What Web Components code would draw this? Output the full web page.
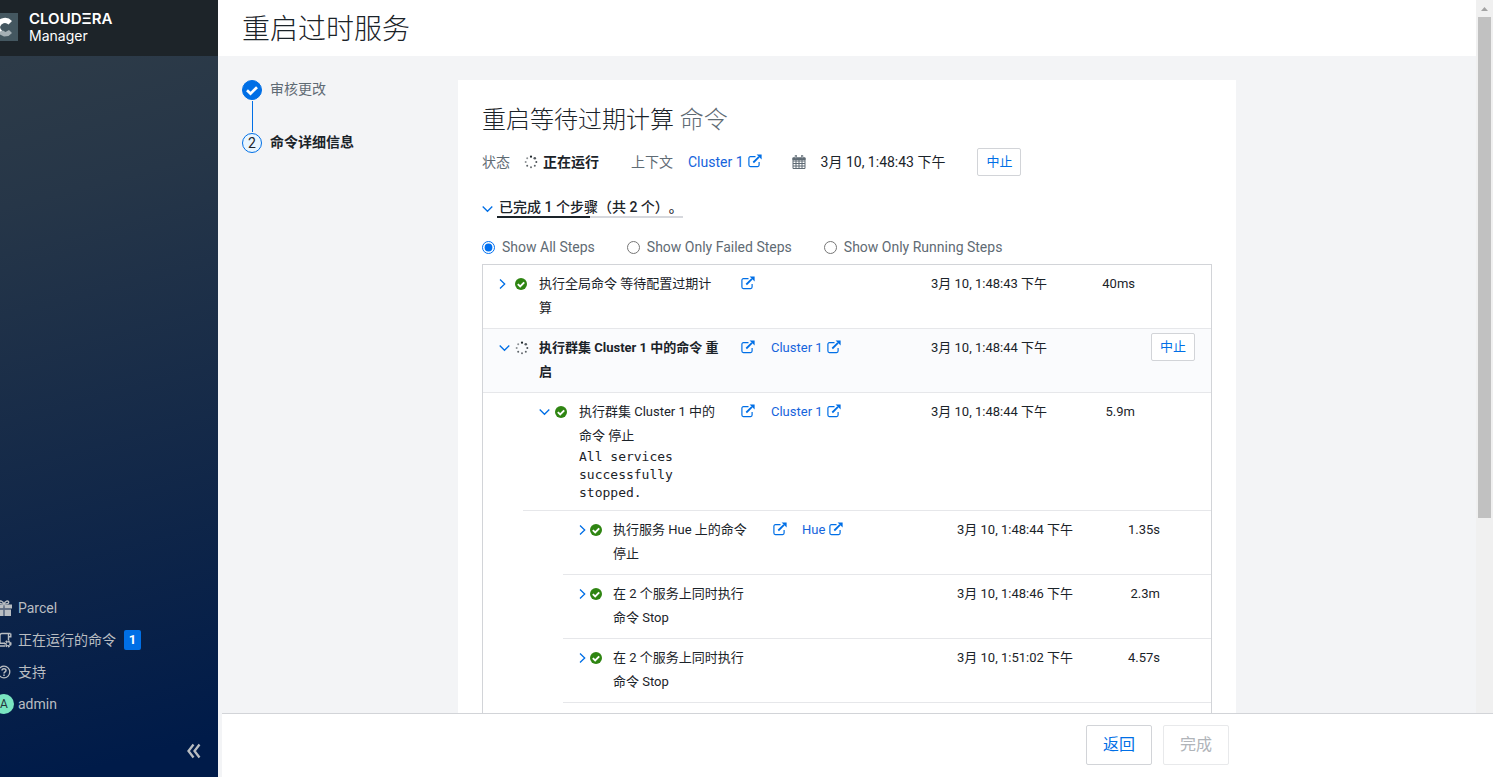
<!DOCTYPE html>
<html lang="zh-CN">
<head>
<meta charset="utf-8">
<title>重启过时服务 - Cloudera Manager</title>
<meta name="viewport" content="width=device-width, initial-scale=1">
<style>
  html, body { height: 100%; margin: 0; }
  body {
    font: 14px/20px Roboto, "Noto Sans CJK SC", sans-serif;
    color: #1b2329;
    overflow: hidden;
    --blue: #006fe6;
    --line: #d2d4d8;
    --muted: #5f6b74;
    --surface: #f3f4f6;
  }
</style>
</head>
<body>
<cm-app></cm-app>

<template id="t-app">
  <style>
    :host { display: grid; grid-template-columns: 218px minmax(0, 1fr); height: 100vh; background: var(--surface); }
    .main { display: flex; flex-direction: column; min-width: 0; min-height: 0; }
    .view { flex: 1; display: grid; grid-template-columns: minmax(0, 1fr) 17px; min-height: 0; }
    .scroll { display: flex; flex-direction: column; min-height: 0; overflow: hidden; }
    header { box-sizing: border-box; background: #fff; height: 56px; padding: 3px 24px 0; display: flex; align-items: center; flex: none; }
    h1 { margin: 0; font-size: 28px; line-height: 40px; font-weight: 300; }
    .body { flex: 1; display: grid; grid-template-columns: 216px minmax(0, 1fr) 216px; padding: 24px 24px 0; min-height: 0; }
    footer { box-sizing: border-box; margin-left: 4px; height: 64px; border-top: 1px solid var(--line); background: #fff; display: flex; align-items: flex-start; justify-content: flex-end; gap: 11px; padding: 11px 264px 0 0; flex: none; }
  </style>
  <cm-sidebar></cm-sidebar>
  <div class="main">
    <div class="view">
      <div class="scroll">
        <header><h1>重启过时服务</h1></header>
        <div class="body">
          <wizard-steps></wizard-steps>
          <command-card></command-card>
        </div>
      </div>
      <scroll-track></scroll-track>
    </div>
    <footer>
      <cm-button size="large">返回</cm-button>
      <cm-button size="large" disabled>完成</cm-button>
    </footer>
  </div>
</template>

<template id="t-sidebar">
  <style>
    :host { display: flex; flex-direction: column; overflow: hidden; color: #b9bdc1; background: linear-gradient(165deg, #303d48 0%, #263648 25%, #001b49 95%); }
    .brand { display: flex; align-items: center; gap: 11px; height: 56px; background: #1d2429; color: #fff; flex: none; margin-left: -10px; }
    .brand svg { margin-bottom: 2px; flex: none; }
    .brand div { display: flex; flex-direction: column; font: 14px/17px Inter, sans-serif; margin-bottom: 2px; }
    .brand b { font-size: 15px; line-height: 17px; font-weight: 600; }
    nav { margin: auto 0 0 -6px; display: flex; flex-direction: column; }
    nav a { display: flex; align-items: center; gap: 4px; height: 32px; color: inherit; text-decoration: none; }
    .slot { width: 20px; height: 20px; display: flex; align-items: center; justify-content: center; }
    .avatar { background: #79e5c0; color: #24343b; border-radius: 50%; font-size: 12px; }
    .badge { margin-left: 4px; width: 17px; height: 20px; border-radius: 2px; background: var(--blue); color: #fff; text-align: center; font-size: 13px; font-weight: 700; }
    button { align-self: flex-end; margin: 20px 14px 16px 0; width: 18px; height: 21px; padding: 0; border: 0; background: none; color: inherit; }
  </style>
  <div class="brand">
    <svg width="28" height="28" viewBox="0 0 28 28" aria-hidden="true">
      <rect width="28" height="28" fill="#445760"/>
      <path d="M22 8A9.5 9.5 0 0 0 5.500 14A9.500 9.500 0 0 0 10 21.500L12 17.500A5 5 0 0 1 10 14A5 5 0 0 1 18.500 11.500Z" fill="#fff"/>
      <path d="M10 18.500 13 17.500 15.500 19 19 17 22 20 18.500 23 14 23.500 10 21.500Z" fill="#a5b0b5"/>
    </svg>
    <div><b>CLOUDΞRA</b><span>Manager</span></div>
  </div>
  <nav aria-label="主导航">
    <a href="#parcel"><span class="slot"><cm-icon name="gift"></cm-icon></span>Parcel</a>
    <a href="#running"><span class="slot"><cm-icon name="commands"></cm-icon></span>正在运行的命令<span class="badge">1</span></a>
    <a href="#support"><span class="slot"><cm-icon name="help"></cm-icon></span>支持</a>
    <a href="#admin"><span class="slot avatar">A</span>admin</a>
  </nav>
  <button type="button" aria-label="收起"><cm-icon name="collapse"></cm-icon></button>
</template>

<template id="t-wizard">
  <style>
    :host { display: block; }
    ol { list-style: none; margin: 0; padding: 0; }
    li { display: grid; grid-template-columns: 20px 1fr; column-gap: 8px; color: var(--muted); }
    .text { line-height: 18px; }
    .dot { width: 20px; height: 20px; box-sizing: border-box; border-radius: 50%; text-align: center; line-height: 18px; border: 1px solid var(--blue); background: #e9f6ff; color: #1b2329; display: flex; justify-content: center; align-items: center; }
    .done .dot { background: var(--blue); color: #fff; }
    .done::after { content: ""; grid-row: 2; justify-self: center; width: 1px; height: 31px; margin: 1px 0; background: var(--blue); }
    .current { color: #1b2329; font-weight: 700; }
    .current .dot { font-weight: 400; }
  </style>
  <ol>
    <li class="done"><span class="dot"><cm-icon name="check"></cm-icon></span><span class="text">审核更改</span></li>
    <li class="current" aria-current="step"><span class="dot">2</span><span class="text">命令详细信息</span></li>
  </ol>
</template>

<template id="t-card">
  <style>
    :host { display: flex; flex-direction: column; background: #fff; padding: 24px 24px 0; min-height: 0; overflow: hidden; }
    h2 { margin: 0; font-size: 24px; line-height: 32px; font-weight: 300; }
    h2 small { font-size: 24px; color: var(--muted); }
    .meta { display: flex; align-items: center; height: 28px; margin-top: 12px; white-space: nowrap; }
    .label { color: var(--muted); }
    .state { display: flex; align-items: center; gap: 5px; font-weight: 700; margin: 0 32px 0 14px; }
    .ctx { margin: 0 30px 0 15px; }
    .cal { color: var(--muted); display: flex; margin-right: 15px; }
    .when { margin-right: 32px; }
    .progress { display: flex; align-items: center; margin-top: 20px; height: 22px; }
    .progress button { padding: 0; border: 0; background: none; color: var(--blue); display: flex; width: 15px; margin-top: 4px; }
    .bar { height: 21px; padding-left: 2px; font-weight: 500; text-spacing-trim: space-all; background: linear-gradient(#1b2329 0 0) 0 100% / 50% 2px no-repeat, linear-gradient(#d6d8dd 0 0) 0 100% / 100% 2px no-repeat; }
    fieldset { display: flex; gap: 32px; border: 0; margin: 19px 0 7px; padding: 0; color: var(--muted); height: 20px; }
    label { display: flex; align-items: center; gap: 7px; }
    input { margin: 0; width: 13px; height: 13px; accent-color: #0070f0; }
    step-table { flex: 1; }
  </style>
  <h2>重启等待过期计算 <small>命令</small></h2>
  <div class="meta">
    <span class="label">状态</span>
    <span class="state"><cm-icon name="spinner"></cm-icon>正在运行</span>
    <span class="label">上下文</span>
    <ext-link class="ctx" href="#cluster">Cluster 1</ext-link>
    <span class="cal"><cm-icon name="calendar"></cm-icon></span>
    <span class="when">3月 10, 1:48:43 下午</span>
    <cm-button>中止</cm-button>
  </div>
  <div class="progress">
    <button type="button" aria-label="折叠步骤"><cm-icon name="down"></cm-icon></button>
    <span class="bar">已完成 1 个步骤（共 2 个）。</span>
  </div>
  <fieldset aria-label="筛选步骤">
    <label><input type="radio" name="filter" checked>Show All Steps</label>
    <label><input type="radio" name="filter">Show Only Failed Steps</label>
    <label><input type="radio" name="filter">Show Only Running Steps</label>
  </fieldset>
  <step-table></step-table>
</template>

<template id="t-table">
  <style>
    :host { display: block; border: 1px solid var(--line); border-bottom: 0; font-size: 13px; line-height: 24px; min-height: 0; overflow: hidden; }
    table, tbody { display: block; }
    tr { display: grid; grid-template-columns: 40px minmax(0, 1fr) 30px 160px 140px 64px 60px; padding: 7px 16px 8px; border-bottom: 1px solid #e6e7ea; }
    tr.running { background: #fafbfd; }
    tr.l2 { margin-left: 40px; }
    tr.l3 { margin-left: 80px; grid-template-columns: 34px minmax(0, 1fr) 29px 155px 140px 63px 35px; }
    td { display: block; padding: 0; min-width: 0; }
    .marks { display: flex; align-items: center; height: 24px; color: var(--blue); }
    .marks button { display: flex; padding: 0; border: 0; background: none; color: inherit; width: 16px; }
    .l3 .marks button { width: 11px; }
    .name { padding-right: 20px; }
    .running .name { font-weight: 700; }
    code { display: block; width: 110px; font: 13px/18px "DejaVu Sans Mono", monospace; }
    .duration { text-align: right; }
    .action { display: flex; justify-content: flex-end; height: 24px; }
    cm-button { margin-top: -3px; }
  </style>
  <table aria-label="命令步骤"><tbody></tbody></table>
</template>

<template id="t-button">
  <style>
    :host { display: block; }
    button { box-sizing: border-box; min-width: 44px; height: 28px; padding: 0 8px; border: 1px solid var(--line); border-radius: 2px; background: #fff; color: var(--blue); font: 13px/20px Roboto, "Noto Sans CJK SC", sans-serif; display: block; white-space: nowrap; }
    :host([size="large"]) button { width: 66px; height: 40px; font-size: 16px; line-height: 24px; }
    button:disabled { color: #b0b4b9; border-color: #e8e9eb; }
  </style>
  <button type="button"><slot></slot></button>
</template>

<template id="t-link">
  <style>
    :host { display: block; white-space: nowrap; }
    a { display: flex; width: max-content; align-items: center; gap: 4px; color: #1664dc; text-decoration: none; }
    cm-icon { color: var(--blue); margin-bottom: 2px; }
    :host([bare]) a { height: 24px; }
  </style>
  <a><slot></slot><cm-icon name="external"></cm-icon></a>
</template>

<template id="t-scroll">
  <style>
    :host { display: flex; flex-direction: column; background: #f0f0f0; padding: 0 2px; }
    svg { flex: none; display: block; }
    .thumb { flex: 72; background: #c1c1c1; }
    .rest { flex: 28; }
  </style>
  <svg width="13" height="17" viewBox="0 0 13 17" aria-hidden="true"><path d="M3 11 6.500 7 10 11Z" fill="#a3a3a3"/></svg>
  <div class="thumb"></div>
  <div class="rest"></div>
</template>

<script>
  const ICONS = {
    external: [14, 14, '<path d="M7.500 2.700H2.400A1.500 1.500 0 0 0 .9 4.200v6.900a1.500 1.500 0 0 0 1.500 1.500h7.200a1.500 1.500 0 0 0 1.500-1.500V8" fill="none" stroke="currentColor" stroke-width="1.200"/><path d="M5.300 8.500 11 2.800" stroke="currentColor" stroke-width="1.800"/><path d="M8.600.4H13.600V5.400Z" fill="currentColor"/>'],
    down: [11, 8, '<path d="M.7 1.500 5.500 6.300 10.300 1.500" fill="none" stroke="currentColor" stroke-width="1.300"/>'],
    right: [7, 12, '<path d="M1 1.500 5.700 6 1 10.500" fill="none" stroke="currentColor" stroke-width="1.300"/>'],
    ok: [12, 12, '<circle cx="6" cy="6" r="6" fill="#2f8512"/><path d="M2.800 6.100 5.200 8.400 9.200 4.300" fill="none" stroke="#fff" stroke-width="1.900"/>'],
    check: [14, 14, '<path d="M2 7.300 5.500 10.600 12 4.200" fill="none" stroke="currentColor" stroke-width="2.700"/>'],
    spinner: [14, 14, '<g fill="#1b2329"><circle cx="7" cy="1.700" r="1.100"/><circle cx="10.800" cy="3.200" r="1.300" opacity=".75"/><circle cx="12.300" cy="7" r="1" opacity=".8"/><circle cx="10.800" cy="10.800" r="1" opacity=".7"/><circle cx="7" cy="12.300" r="1" opacity=".65"/><circle cx="3.200" cy="10.800" r="1" opacity=".7"/><circle cx="1.700" cy="7" r="1" opacity=".5"/><circle cx="3.200" cy="3.200" r="1" opacity=".5"/></g>'],
    calendar: [14, 14, '<path d="M1 3h12v10.500H1zM1 6h12M1 8.500h12M1 11h12M4 5v8.500M7 5v8.500M10 5v8.500" fill="none" stroke="currentColor"/><path d="M.5 2.500h13V5H.5z" fill="currentColor"/><path d="M3.900.3v3.400M10.100.3v3.400" stroke="currentColor" stroke-width="2.200"/><path d="M3.900 1v2.200M10.100 1v2.200" stroke="#fff" stroke-width=".6"/>'],
    gift: [16, 16, '<path d="M0 4.500h7.300v4H0zM8.700 4.500H16v4H8.700zM1 9.500h6.300V16H1zM8.700 9.500H15V16H8.700z" fill="currentColor"/><path d="M7.300 4.500h1.400V16H7.300z" fill="currentColor" opacity=".55"/><path d="M8 4.300C6.500 4 3 3.800 3.300 2S7 .6 8 4.300C9 .6 12.400.2 12.700 2S9.500 4 8 4.300Z" fill="none" stroke="currentColor" stroke-width="1.400"/>'],
    commands: [16, 16, '<path d="M4 11V3.200A2 2 0 0 1 6 1.500h8.500M12.500 2v6M14.800 1.500v3.300H12.500M1 11.200h8M1.200 11.200c0 1.800.8 2.800 2.300 2.800H9" fill="none" stroke="currentColor" stroke-width="1.400"/><circle cx="12" cy="11.800" r="2.700" fill="none" stroke="currentColor" stroke-width="1.800" stroke-dasharray="1.700 .8"/><circle cx="12" cy="11.800" r="2" fill="none" stroke="currentColor"/>'],
    help: [14, 14, '<circle cx="7" cy="7" r="5.800" fill="none" stroke="currentColor" stroke-width="1.300"/><path d="M5 5.600C5 3.200 9 3.200 9 5.500 9 6.800 7 6.800 7 8.400M7 9.400v1.500" fill="none" stroke="currentColor" stroke-width="1.500"/>'],
    collapse: [16, 16, '<path d="M7.500 1.500 2.500 8l5 6.500M13.500 1.500 8.500 8l5 6.500" fill="none" stroke="currentColor" stroke-width="2.300"/>']
  };

  const STEPS = [
    { level: 1, status: 'ok', name: '执行全局命令 等待配置过期计算', time: '3月 10, 1:48:43 下午', duration: '40ms', link: true },
    { level: 1, status: 'spinner', open: true, name: '执行群集 Cluster 1 中的命令 重启', context: 'Cluster 1', time: '3月 10, 1:48:44 下午', link: true, abort: true },
    { level: 2, status: 'ok', open: true, name: '执行群集 Cluster 1 中的命令 停止', message: 'All services successfully stopped.', context: 'Cluster 1', time: '3月 10, 1:48:44 下午', duration: '5.9m', link: true },
    { level: 3, status: 'ok', name: '执行服务 Hue 上的命令 停止', context: 'Hue', time: '3月 10, 1:48:44 下午', duration: '1.35s', link: true },
    { level: 3, status: 'ok', name: '在 2 个服务上同时执行命令 Stop', time: '3月 10, 1:48:46 下午', duration: '2.3m' },
    { level: 3, status: 'ok', name: '在 2 个服务上同时执行命令 Stop', time: '3月 10, 1:51:02 下午', duration: '4.57s' }
  ];

  class TemplateElement extends HTMLElement {
    constructor() {
      super();
      this.attachShadow({ mode: 'open' });
      const t = document.getElementById(this.constructor.template);
      if (t) this.shadowRoot.append(t.content.cloneNode(true));
    }
  }

  class CmIcon extends TemplateElement {
    connectedCallback() {
      const [w, h, body] = ICONS[this.getAttribute('name')];
      this.shadowRoot.innerHTML = `<style>:host{display:block;flex:none}svg{display:block}</style><svg width="${w}" height="${h}" viewBox="0 0 ${w} ${h}" aria-hidden="true">${body}</svg>`;
    }
  }
  class CmButton extends TemplateElement {
    static template = 't-button';
    connectedCallback() { this.shadowRoot.querySelector('button').disabled = this.hasAttribute('disabled'); }
  }
  class ExtLink extends TemplateElement {
    static template = 't-link';
    connectedCallback() {
      const a = this.shadowRoot.querySelector('a');
      a.href = this.getAttribute('href') || '#';
      if (this.hasAttribute('bare')) a.setAttribute('aria-label', '打开');
    }
  }
  class StepTable extends TemplateElement {
    static template = 't-table';
    connectedCallback() {
      this.shadowRoot.querySelector('tbody').innerHTML = STEPS.map(s => `
        <tr class="l${s.level}${s.status === 'spinner' ? ' running' : ''}">
          <td class="marks"><button type="button" aria-label="展开"><cm-icon name="${s.open ? 'down' : 'right'}"></cm-icon></button><cm-icon name="${s.status}"></cm-icon></td>
          <td class="name">${s.name}${s.message ? `<code>${s.message}</code>` : ''}</td>
          <td>${s.link ? '<ext-link bare href="#step"></ext-link>' : ''}</td>
          <td>${s.context ? `<ext-link href="#context">${s.context}</ext-link>` : ''}</td>
          <td>${s.time}</td>
          <td class="duration">${s.duration || ''}</td>
          <td class="action">${s.abort ? '<cm-button>中止</cm-button>' : ''}</td>
        </tr>`).join('');
    }
  }

  customElements.define('cm-icon', CmIcon);
  customElements.define('cm-button', CmButton);
  customElements.define('ext-link', ExtLink);
  customElements.define('step-table', StepTable);
  customElements.define('scroll-track', class extends TemplateElement { static template = 't-scroll'; });
  customElements.define('wizard-steps', class extends TemplateElement { static template = 't-wizard'; });
  customElements.define('command-card', class extends TemplateElement { static template = 't-card'; });
  customElements.define('cm-sidebar', class extends TemplateElement { static template = 't-sidebar'; });
  customElements.define('cm-app', class extends TemplateElement { static template = 't-app'; });
</script>
</body>
</html>
